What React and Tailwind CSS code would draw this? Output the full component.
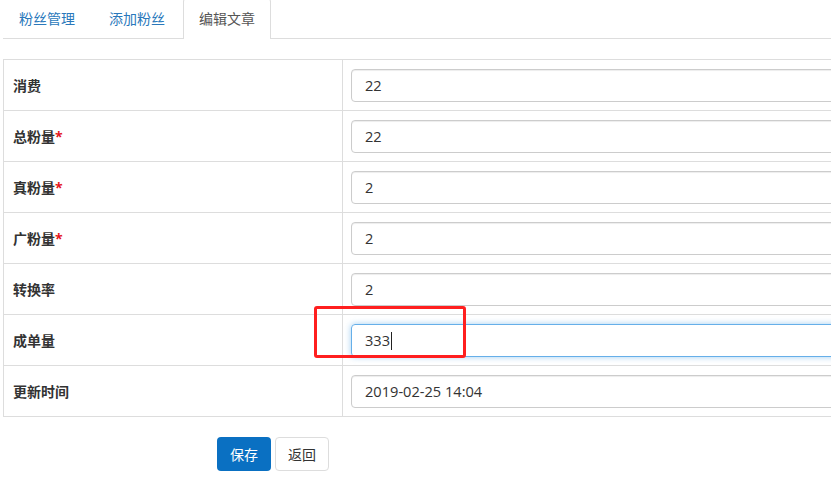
import React from "react";

const rows = [
  { label: "消费", req: false, value: "22" },
  { label: "总粉量", req: true, value: "22" },
  { label: "真粉量", req: true, value: "2" },
  { label: "广粉量", req: true, value: "2" },
  { label: "转换率", req: false, value: "2" },
  { label: "成单量", req: false, value: "333", focus: true },
  { label: "更新时间", req: false, value: "2019-02-25 14:04" },
];

export default function App() {
  return (
    <div
      className="w-[831px] h-[491px] overflow-hidden bg-white text-[14px] text-[#333]"
      style={{ fontFamily: '"Open Sans", "Noto Sans CJK SC", sans-serif' }}
    >
      <div className="w-[1100px] pl-[3px]">
        {/* tabs */}
        <div className="h-[39px] overflow-hidden">
          <div className="-mt-[2px] flex border-b border-[#ddd] h-[41px]">
            <div className="mr-[2px] px-[16px] h-[41px] flex items-center text-[#2a78bb] leading-[20px]">粉丝管理</div>
            <div className="mr-[2px] px-[16px] h-[41px] flex items-center text-[#2a78bb] leading-[20px]">添加粉丝</div>
            <div className="mr-[2px] px-[15px] h-[42px] flex items-center text-[#555] leading-[20px] bg-white border border-[#ddd] border-b-white rounded-t-[4px] pb-[1px]">
              编辑文章
            </div>
          </div>
        </div>

        {/* table */}
        <div className="mt-[20px] border-t border-l border-[#ddd] relative">
          {rows.map((r) => (
            <div key={r.label} className="flex border-b border-[#ddd] h-[51px]">
              <div className="w-[339px] border-r border-[#ddd] pl-[9px] flex items-center font-bold">
                {r.label}
                {r.req && <span className="text-[#e4141b]">*</span>}
              </div>
              <div className="flex-1 px-[8px] pt-[9px]">
                <div
                  className={
                    r.focus
                      ? "h-[33px] w-[700px] rounded-[4px] border border-[#66afe9] shadow-[0_0_6px_rgba(102,175,233,0.6)] flex items-center pl-[13px] text-[#333] text-[14.6px]"
                      : "h-[33px] w-[700px] rounded-[4px] border border-[#ccc] shadow-[inset_0_1px_1px_rgba(0,0,0,0.075)] flex items-center pl-[13px] text-[#333] text-[14.6px]"
                  }
                >
                  {r.value}
                  {r.focus && <span className="ml-[1px] inline-block w-[1px] h-[18px] bg-[#222]" />}
                </div>
              </div>
            </div>
          ))}
          {/* red annotation box */}
          <div className="absolute left-[310px] top-[246px] w-[152px] h-[52px] border-[3px] border-[#ff1f1f] rounded-[3px]" />
        </div>

        {/* buttons */}
        <div className="mt-[20px] pl-[214px] flex gap-[4px]">
          <button className="h-[34px] w-[54px] rounded-[4px] bg-[#0a70c2] text-white text-[14px]">保存</button>
          <button className="h-[34px] w-[54px] rounded-[4px] bg-white border border-[#ddd] text-[#333] text-[14px]">返回</button>
        </div>
      </div>
    </div>
  );
}
